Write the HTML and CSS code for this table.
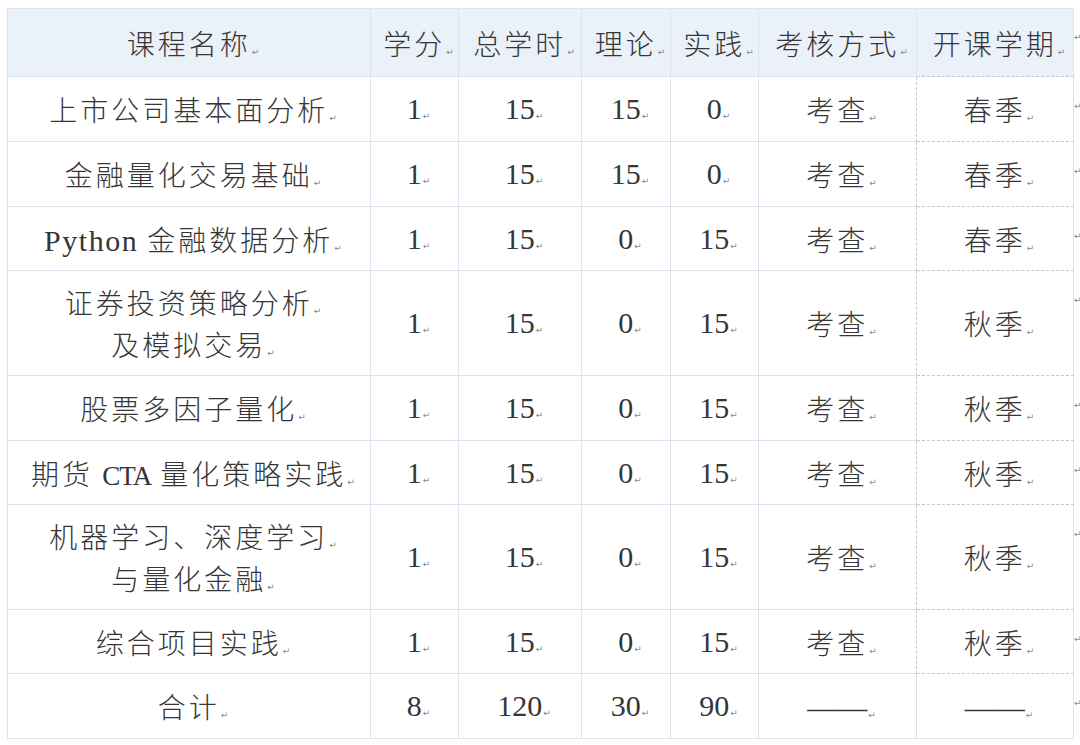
FILE: index.html
```html
<!DOCTYPE html>
<html lang="zh-CN">
<head>
<meta charset="utf-8">
<title>课程表</title>
<link rel="stylesheet" href="styles.css">
</head>
<body>
<div class="page">
  <div class="tbl">
    <div class="c h first"><span class="t">课程名称<span class="p">↵</span></span></div>
    <div class="c h"><span class="t">学分<span class="p">↵</span></span></div>
    <div class="c h"><span class="t">总学时<span class="p">↵</span></span></div>
    <div class="c h"><span class="t">理论<span class="p">↵</span></span></div>
    <div class="c h"><span class="t">实践<span class="p">↵</span></span></div>
    <div class="c h"><span class="t">考核方式<span class="p">↵</span></span></div>
    <div class="c h last"><span class="t">开课学期<span class="p">↵</span></span></div>
    <div class="m">↵</div>

    <div class="c first"><span class="t">上市公司基本面分析<span class="p">↵</span></span></div>
    <div class="c"><span class="t n">1<span class="p">↵</span></span></div>
    <div class="c"><span class="t n">15<span class="p">↵</span></span></div>
    <div class="c"><span class="t n">15<span class="p">↵</span></span></div>
    <div class="c"><span class="t n">0<span class="p">↵</span></span></div>
    <div class="c d6"><span class="t">考查<span class="p">↵</span></span></div>
    <div class="c d7"><span class="t">春季<span class="p">↵</span></span></div>
    <div class="m">↵</div>

    <div class="c first"><span class="t">金融量化交易基础<span class="p">↵</span></span></div>
    <div class="c"><span class="t n">1<span class="p">↵</span></span></div>
    <div class="c"><span class="t n">15<span class="p">↵</span></span></div>
    <div class="c"><span class="t n">15<span class="p">↵</span></span></div>
    <div class="c"><span class="t n">0<span class="p">↵</span></span></div>
    <div class="c d6"><span class="t">考查<span class="p">↵</span></span></div>
    <div class="c d7"><span class="t">春季<span class="p">↵</span></span></div>
    <div class="m">↵</div>

    <div class="c first"><span class="t"><span class="lat">Python</span> 金融数据分析<span class="p">↵</span></span></div>
    <div class="c"><span class="t n">1<span class="p">↵</span></span></div>
    <div class="c"><span class="t n">15<span class="p">↵</span></span></div>
    <div class="c"><span class="t n">0<span class="p">↵</span></span></div>
    <div class="c"><span class="t n">15<span class="p">↵</span></span></div>
    <div class="c d6"><span class="t">考查<span class="p">↵</span></span></div>
    <div class="c d7"><span class="t">春季<span class="p">↵</span></span></div>
    <div class="m">↵</div>

    <div class="c first"><span class="t"><span class="ln">证券投资策略分析<span class="p">↵</span></span><span class="ln">及模拟交易<span class="p">↵</span></span></span></div>
    <div class="c"><span class="t n">1<span class="p">↵</span></span></div>
    <div class="c"><span class="t n">15<span class="p">↵</span></span></div>
    <div class="c"><span class="t n">0<span class="p">↵</span></span></div>
    <div class="c"><span class="t n">15<span class="p">↵</span></span></div>
    <div class="c d6"><span class="t">考查<span class="p">↵</span></span></div>
    <div class="c d7"><span class="t">秋季<span class="p">↵</span></span></div>
    <div class="m">↵</div>

    <div class="c first"><span class="t">股票多因子量化<span class="p">↵</span></span></div>
    <div class="c"><span class="t n">1<span class="p">↵</span></span></div>
    <div class="c"><span class="t n">15<span class="p">↵</span></span></div>
    <div class="c"><span class="t n">0<span class="p">↵</span></span></div>
    <div class="c"><span class="t n">15<span class="p">↵</span></span></div>
    <div class="c d6"><span class="t">考查<span class="p">↵</span></span></div>
    <div class="c d7"><span class="t">秋季<span class="p">↵</span></span></div>
    <div class="m">↵</div>

    <div class="c first"><span class="t">期货 <span class="lat cap">CTA</span> 量化策略实践<span class="p">↵</span></span></div>
    <div class="c"><span class="t n">1<span class="p">↵</span></span></div>
    <div class="c"><span class="t n">15<span class="p">↵</span></span></div>
    <div class="c"><span class="t n">0<span class="p">↵</span></span></div>
    <div class="c"><span class="t n">15<span class="p">↵</span></span></div>
    <div class="c d6"><span class="t">考查<span class="p">↵</span></span></div>
    <div class="c d7"><span class="t">秋季<span class="p">↵</span></span></div>
    <div class="m">↵</div>

    <div class="c first"><span class="t"><span class="ln">机器学习、深度学习<span class="p">↵</span></span><span class="ln">与量化金融<span class="p">↵</span></span></span></div>
    <div class="c"><span class="t n">1<span class="p">↵</span></span></div>
    <div class="c"><span class="t n">15<span class="p">↵</span></span></div>
    <div class="c"><span class="t n">0<span class="p">↵</span></span></div>
    <div class="c"><span class="t n">15<span class="p">↵</span></span></div>
    <div class="c d6"><span class="t">考查<span class="p">↵</span></span></div>
    <div class="c d7"><span class="t">秋季<span class="p">↵</span></span></div>
    <div class="m">↵</div>

    <div class="c first"><span class="t">综合项目实践<span class="p">↵</span></span></div>
    <div class="c"><span class="t n">1<span class="p">↵</span></span></div>
    <div class="c"><span class="t n">15<span class="p">↵</span></span></div>
    <div class="c"><span class="t n">0<span class="p">↵</span></span></div>
    <div class="c"><span class="t n">15<span class="p">↵</span></span></div>
    <div class="c d6"><span class="t">考查<span class="p">↵</span></span></div>
    <div class="c d7"><span class="t">秋季<span class="p">↵</span></span></div>
    <div class="m">↵</div>

    <div class="c first"><span class="t">合计<span class="p">↵</span></span></div>
    <div class="c"><span class="t n">8<span class="p">↵</span></span></div>
    <div class="c"><span class="t n">120<span class="p">↵</span></span></div>
    <div class="c"><span class="t n">30<span class="p">↵</span></span></div>
    <div class="c"><span class="t n">90<span class="p">↵</span></span></div>
    <div class="c"><span class="t"><span class="dash">——</span><span class="p">↵</span></span></div>
    <div class="c"><span class="t"><span class="dash">——</span><span class="p">↵</span></span></div>
    <div class="m">↵</div>
  </div>
</div>
</body>
</html>
```

FILE: styles.css
```css
html, body {
  margin: 0;
  padding: 0;
  background: #ffffff;
}

.page {
  padding: 8px 0 0 7px;
}

.tbl {
  display: grid;
  grid-template-columns: 364px 88px 123px 89px 88px 158px 157px 6px;
  grid-template-rows: 69px 65px 65px 64px 105px 65px 64px 105px 64px 65px;
}

.c {
  box-sizing: border-box;
  padding-left: 8px;
  border-right: 1px solid #dde4ee;
  border-bottom: 1px solid #dde4ee;
  display: flex;
  align-items: center;
  justify-content: center;
  text-align: center;
  white-space: nowrap;
  font-family: "Noto Sans CJK SC", sans-serif;
  font-weight: 300;
  font-size: 28px;
  line-height: 42px;
  letter-spacing: 3px;
  color: #363636;
}

.t {
  display: block;
}

.c.h {
  background: #ebf1f9;
  border-top: 1px solid #dde4ee;
}

.c.first {
  border-left: 1px solid #dde4ee;
}

.c.h.last {
  border-bottom: 1px dashed #c8c8c8;
}

.c.d6 {
  border-right: 1px dashed #c8c8c8;
}

.c.d7 {
  border-bottom: 1px dashed #c8c8c8;
}

.ln {
  display: block;
  height: 42px;
}

.n {
  font-family: "Liberation Serif", serif;
  font-weight: 400;
  font-size: 30px;
  letter-spacing: 0;
}

.lat {
  font-family: "Liberation Serif", serif;
  font-weight: 400;
  font-size: 30px;
  line-height: 0;
  letter-spacing: 1.5px;
}

.lat.cap {
  font-size: 27px;
  letter-spacing: -1px;
}

.dash {
  font-family: "Liberation Serif", serif;
  font-weight: 400;
  font-size: 30px;
  line-height: 0;
  letter-spacing: 0;
}

.p {
  font-family: "DejaVu Sans", sans-serif;
  font-weight: 400;
  font-size: 9px;
  line-height: 0;
  letter-spacing: 0;
  color: #8a8a8a;
  margin-left: 1px;
}

.m {
  font-family: "DejaVu Sans", sans-serif;
  font-size: 9px;
  line-height: 42px;
  padding-top: 8px;
  color: #8a8a8a;
  align-self: start;
}
```
